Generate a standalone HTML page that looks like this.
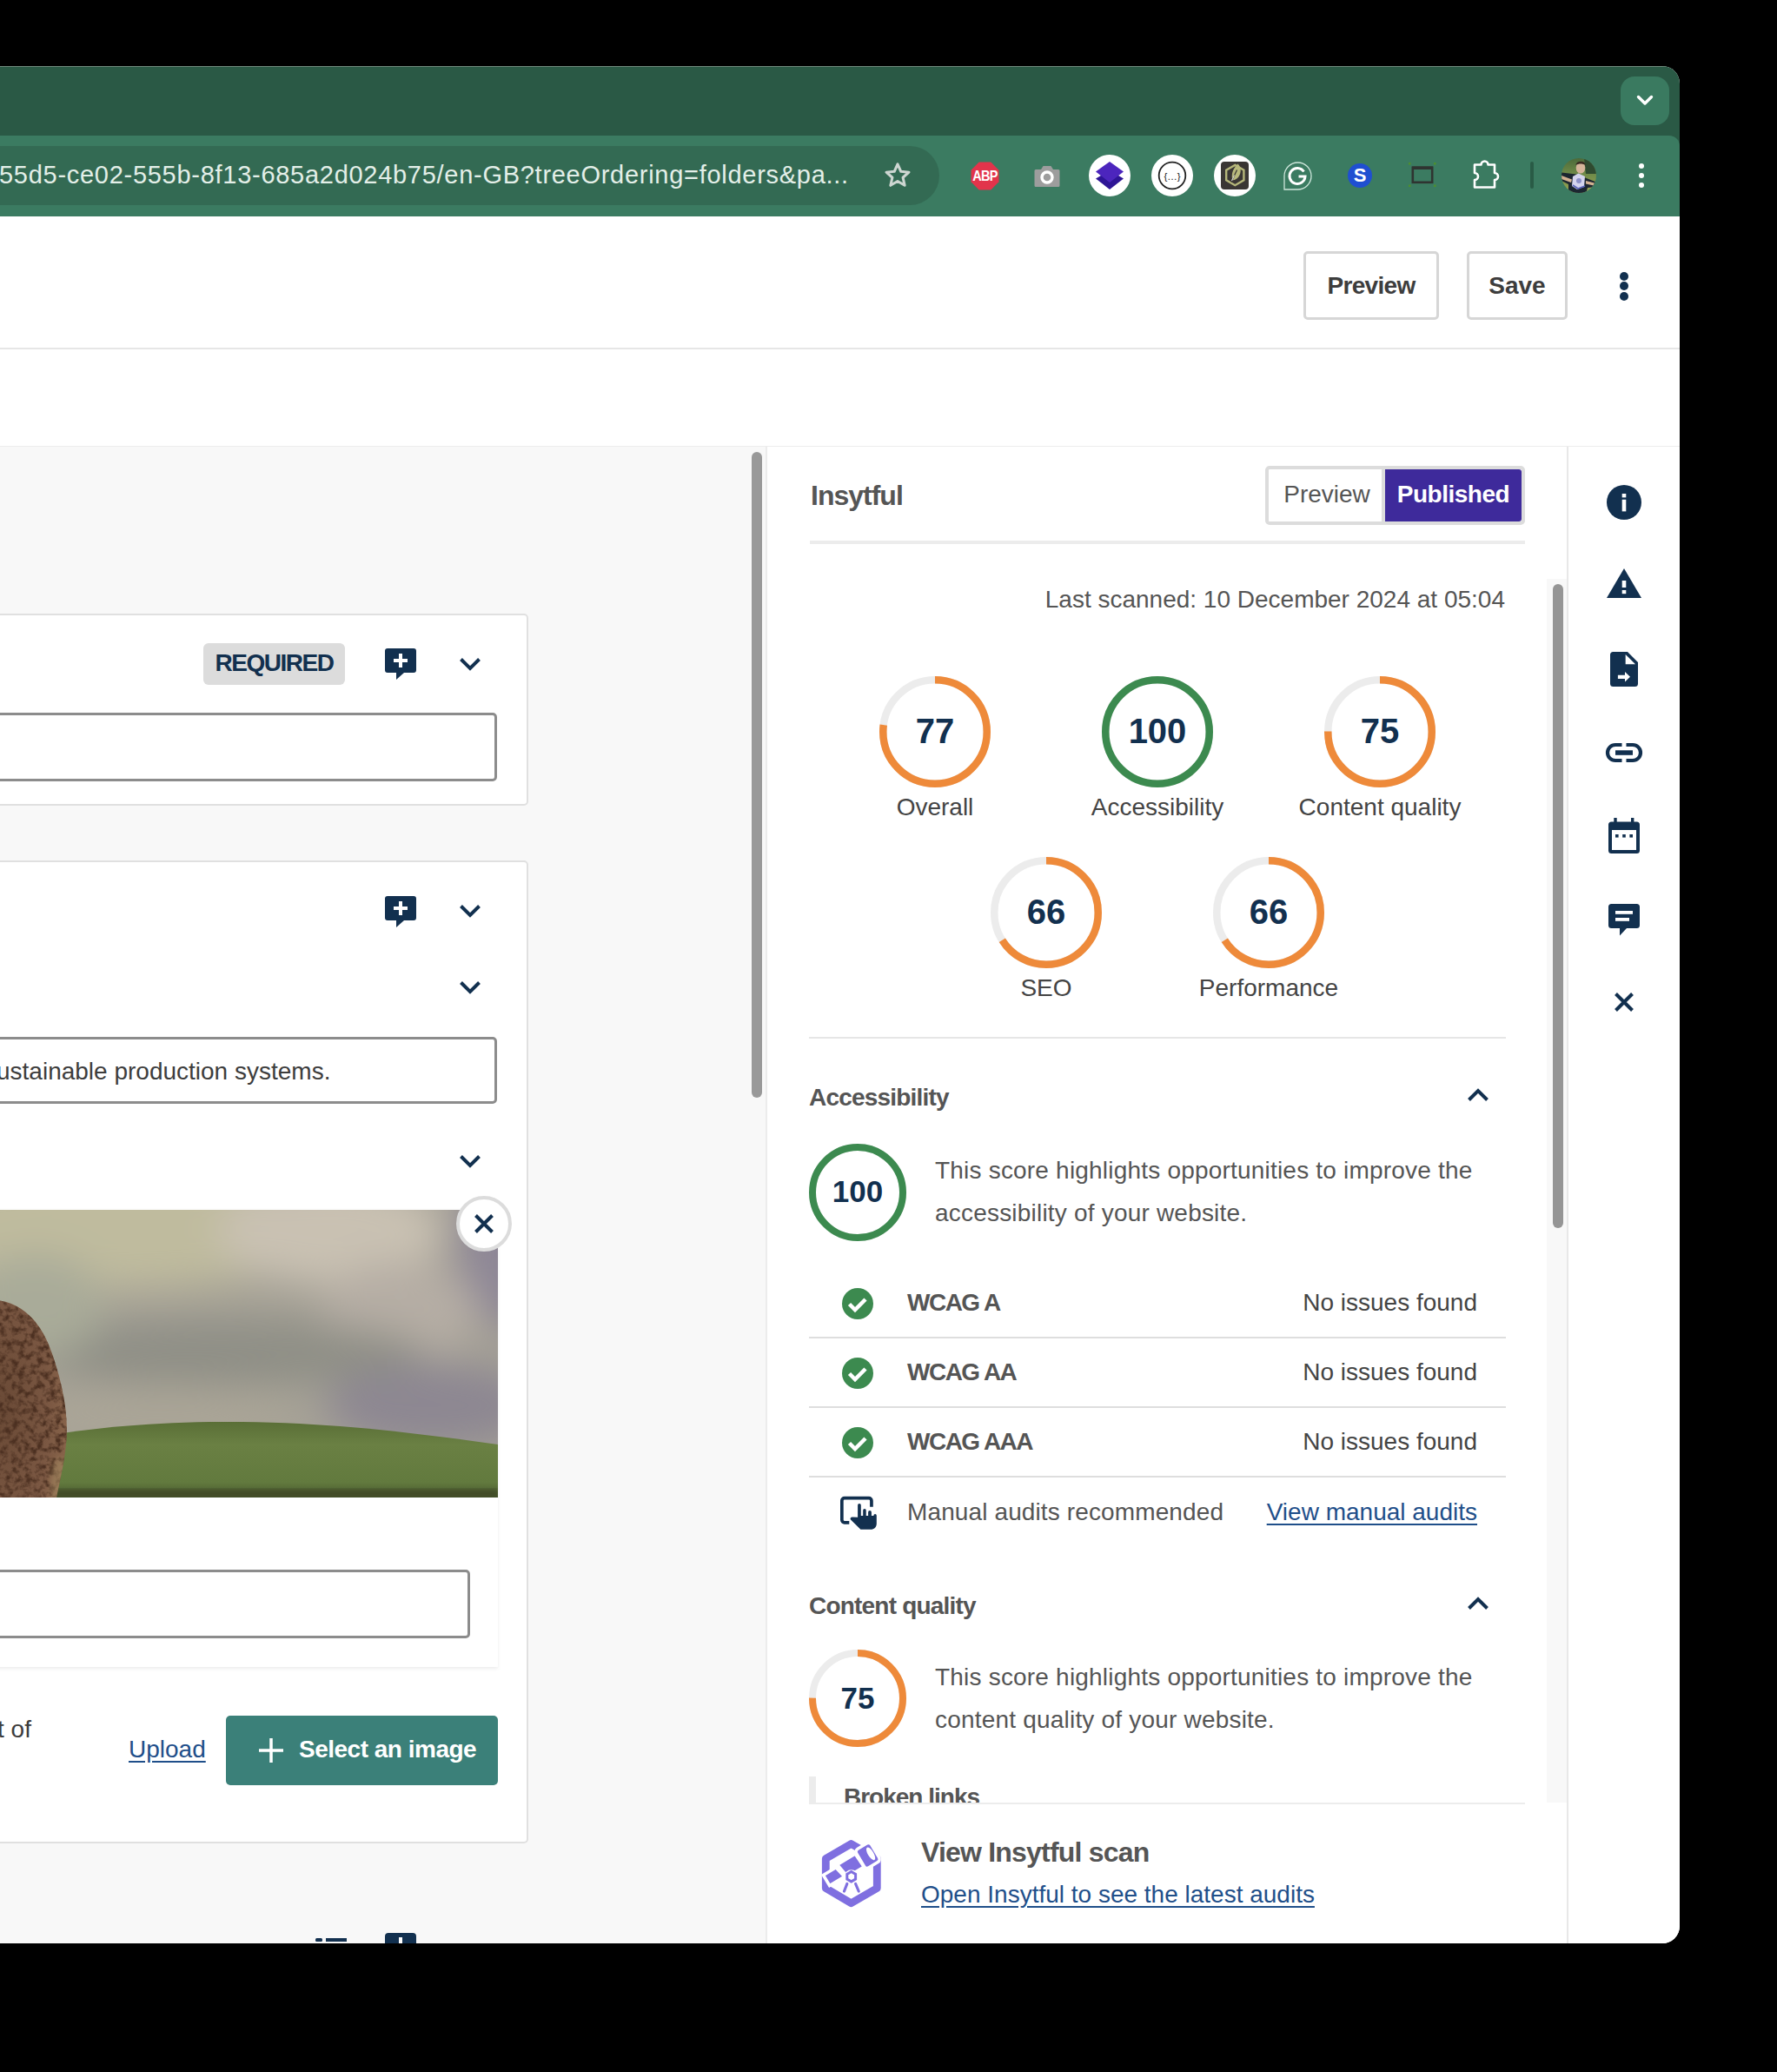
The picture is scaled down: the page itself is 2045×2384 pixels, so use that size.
<!DOCTYPE html>
<html><head><meta charset="utf-8">
<style>
html,body{margin:0;padding:0}
body{width:2045px;height:2384px;background:#000;position:relative;overflow:hidden;font-family:"Liberation Sans",sans-serif}
.a{position:absolute}
.t{position:absolute;line-height:1;white-space:nowrap}
.win{position:absolute;left:0;top:76px;width:1933px;height:2160px;border-radius:0 20px 20px 0;overflow:hidden;background:#fff}
.pg{position:absolute;left:0;top:-76px;width:1933px;height:2236px}
svg{position:absolute;overflow:visible}
</style></head>
<body>
<div class="win"><div class="pg">
  <!-- tab bar -->
  <div class="a" style="left:0;top:76px;width:1933px;height:100px;background:#2a5945"></div>
  <div class="a" style="left:0;top:76px;width:1933px;height:1px;background:#6f8a7c"></div>
  <div class="a" style="left:1865px;top:88px;width:56px;height:56px;border-radius:16px;background:#3a7a60"></div>
  <svg style="left:1865px;top:88px" width="56" height="56"><path d="M20.5 23.5 L28 31 L35.5 23.5" fill="none" stroke="#fff" stroke-width="3.4" stroke-linecap="round" stroke-linejoin="round"/></svg>
  <!-- toolbar -->
  <div class="a" style="left:0;top:156px;width:1933px;height:93px;background:#3b7b61;border-radius:0 12px 0 0"></div>
  <div class="a" style="left:-40px;top:168px;width:1121px;height:68px;border-radius:34px;background:#336a53"></div>
  <div class="t" style="left:-1px;top:187px;font-size:29px;letter-spacing:0.72px;color:#e3efe8">55d5-ce02-555b-8f13-685a2d024b75/en-GB?treeOrdering=folders&amp;pa...</div>
  <!-- star -->
  <svg style="left:1017px;top:186px" width="32" height="32" viewBox="0 0 24 24"><path d="M12 2.2l2.85 6.3 6.9.65-5.2 4.55 1.55 6.75L12 16.9l-6.1 3.55 1.55-6.75-5.2-4.55 6.9-.65z" fill="none" stroke="#cdd6d1" stroke-width="2.3" stroke-linejoin="round"/></svg>
  <!-- ABP -->
  <svg style="left:1117px;top:186px" width="33" height="33" viewBox="0 0 33 33"><path d="M9.7 0.5h13.6l9.2 9.2v13.6l-9.2 9.2H9.7L0.5 23.3V9.7z" fill="#e2344b"/><text x="16.5" y="22.3" text-anchor="middle" font-family="Liberation Sans" font-weight="bold" font-size="16.5" fill="#fff" letter-spacing="-0.8" transform="translate(16.5 0) scale(0.88 1) translate(-16.5 0)">ABP</text></svg>
  <!-- camera -->
  <svg style="left:1190px;top:188px" width="30" height="30" viewBox="0 0 30 30"><path d="M2 7h6l2.5-4h9l2.5 4h6a1.5 1.5 0 0 1 1.5 1.5v17a1.5 1.5 0 0 1-1.5 1.5H2A1.5 1.5 0 0 1 .5 25.5v-17A1.5 1.5 0 0 1 2 7z" fill="#9d9d9d"/><circle cx="15" cy="16" r="6" fill="none" stroke="#fff" stroke-width="3.4"/></svg>
  <!-- layers -->
  <div class="a" style="left:1253px;top:178px;width:48px;height:48px;border-radius:50%;background:#fff"></div>
  <svg style="left:1261px;top:185px" width="32" height="34" viewBox="0 0 32 34"><path d="M0 20.5L16 11 32 20.5 16 33z" fill="#2e1596"/><path d="M0 12.5L16 1 32 12.5 16 25z" fill="#4c25bd"/></svg>
  <!-- {...} -->
  <div class="a" style="left:1325px;top:178px;width:48px;height:48px;border-radius:50%;background:#fff"></div>
  <svg style="left:1325px;top:178px" width="48" height="48"><circle cx="24" cy="24" r="15.3" fill="none" stroke="#222" stroke-width="1.8"/><text x="24" y="28.5" text-anchor="middle" font-family="Liberation Sans" font-size="11.5" fill="#222">{…}</text></svg>
  <!-- leaf -->
  <div class="a" style="left:1397px;top:178px;width:48px;height:48px;border-radius:50%;background:#fff"></div>
  <div class="a" style="left:1405px;top:186px;width:32px;height:32px;border-radius:4px;background:#3a3634"></div>
  <svg style="left:1405px;top:186px" width="32" height="32" viewBox="0 0 32 32"><path d="M16.3 3.9l10.1 5.8v11.7l-10.1 5.8-10.1-5.8V9.7z" fill="none" stroke="#b5b67a" stroke-width="2.4"/><path d="M19.5 2.5c4 3.5 4.5 10.5 0.5 15.5-2 2.5-5 3.5-6.5 3-1.5-4-.5-10 2-13.5 1-1.7 2.5-3.5 4-5z" fill="#b8b97c"/><path d="M12 23.5l6.5-14" stroke="#3a3634" stroke-width="1.3"/><path d="M12.5 22l3-6.5" stroke="#d8d8d0" stroke-width="1.2"/></svg>
  <!-- G -->
  <svg style="left:1477px;top:186px" width="33" height="33" viewBox="0 0 33 33"><path d="M1 32V16.5A15.5 15.5 0 1 1 16.5 32z" fill="none" stroke="#cfe7dc" stroke-width="1.3"/><path d="M23.5 11.5A9 9 0 1 0 25 17h-7.5" fill="none" stroke="#fff" stroke-width="3"/></svg>
  <!-- S -->
  <div class="a" style="left:1551px;top:188px;width:28px;height:28px;border-radius:50%;background:#1f4fd1"></div>
  <div class="t" style="left:1551px;top:191px;width:28px;text-align:center;font-size:22px;font-weight:bold;color:#fff">S</div>
  <!-- window -->
  <svg style="left:1620px;top:186px" width="34" height="30" viewBox="0 0 34 30"><rect x="5.8" y="6.8" width="22.4" height="17" fill="none" stroke="#2f3431" stroke-width="2.6"/><rect x="5" y="5.5" width="24" height="3.5" fill="#2f3431"/><g fill="#4c8f2e"><rect x="1" y="1" width="2.5" height="2.5"/><rect x="30" y="1" width="2.5" height="2.5"/><rect x="1" y="26.5" width="2.5" height="2.5"/><rect x="30" y="26.5" width="2.5" height="2.5"/></g></svg>
  <!-- puzzle -->
  <svg style="left:1693px;top:183px" width="36" height="36" viewBox="0 0 36 36"><path d="M4 6.5h7.5a4 4 0 0 1 8 0H27v9.5a4 4 0 0 1 0 8V32.5H4V24a4 4 0 0 0 0-8z" fill="none" stroke="#fff" stroke-width="2.6" stroke-linejoin="round"/></svg>
  <!-- separator -->
  <div class="a" style="left:1761px;top:186px;width:4px;height:31px;border-radius:2px;background:#295b46"></div>
  <!-- avatar -->
  <svg style="left:1797px;top:182px" width="40" height="40" viewBox="0 0 40 40"><defs><clipPath id="av"><circle cx="20" cy="20" r="20"/></clipPath><linearGradient id="avg" x1="0" y1="0" x2="0" y2="1"><stop offset="0" stop-color="#4c6a3a"/><stop offset="0.45" stop-color="#6f8a48"/><stop offset="1" stop-color="#9aa552"/></linearGradient></defs><g clip-path="url(#av)"><rect width="40" height="40" fill="url(#avg)"/><path d="M26 0h14v18H28z" fill="#2f4a30"/><path d="M0 16.5L17 18.5 40 27.5V33L30 34 28 41H8V30L0 26z" fill="#1c2630"/><path d="M0 20l12 4.5-1 3.5L0 24z" fill="#d2b090"/><path d="M28 26l10 2.5-1 3-9-2z" fill="#d2b090"/><ellipse cx="22" cy="11" rx="5.3" ry="6.6" fill="#d6b49a"/><path d="M16.5 8c0-5 11-6 11 0-3-2-8-2-11 0z" fill="#3a2b22"/><path d="M19.5 17.5l7.5 3.5-1 12-8 3-6-4 1-11z" fill="#d4d4ee"/><path d="M13 31l6 4 8-3" fill="none" stroke="#5a62b8" stroke-width="1.6"/><circle cx="20" cy="26" r="3" fill="#8c90c8"/></g></svg>
  <!-- dots -->
  <div class="a" style="left:1886px;top:188px;width:6px;height:6px;border-radius:50%;background:#fff"></div>
  <div class="a" style="left:1886px;top:199px;width:6px;height:6px;border-radius:50%;background:#fff"></div>
  <div class="a" style="left:1886px;top:210px;width:6px;height:6px;border-radius:50%;background:#fff"></div>

  <!-- page header -->
  <div class="a" style="left:0;top:249px;width:1933px;height:151px;background:#fff;border-bottom:2px solid #e6e6e6"></div>
  <div class="a" style="left:0;top:402px;width:1933px;height:111px;background:#fff;border-bottom:2px solid #ececec"></div>
  <div class="a" style="left:1500px;top:289px;width:150px;height:73px;border:3px solid #d6d6d6;border-radius:5px"></div>
  <div class="t" style="left:1500px;top:315px;width:156px;text-align:center;font-size:28px;font-weight:bold;color:#3d3d3d;letter-spacing:-0.7px">Preview</div>
  <div class="a" style="left:1688px;top:289px;width:110px;height:73px;border:3px solid #d6d6d6;border-radius:5px"></div>
  <div class="t" style="left:1688px;top:315px;width:116px;text-align:center;font-size:28px;font-weight:bold;color:#3d3d3d">Save</div>
  <div class="a" style="left:1864px;top:313px;width:10px;height:10px;border-radius:50%;background:#12304f"></div>
  <div class="a" style="left:1864px;top:324px;width:10px;height:10px;border-radius:50%;background:#12304f"></div>
  <div class="a" style="left:1864px;top:336px;width:10px;height:10px;border-radius:50%;background:#12304f"></div>
  <!-- content left -->
  <div class="a" style="left:0;top:514px;width:882px;height:1722px;background:#f8f8f8"></div>
  <div class="a" style="left:865px;top:520px;width:12px;height:743px;border-radius:6px;background:#999"></div>
  <!-- card 1 -->
  <div class="a" style="left:-10px;top:706px;width:614px;height:217px;background:#fff;border:2px solid #e0e0e0;border-radius:5px"></div>
  <div class="a" style="left:234px;top:740px;width:163px;height:48px;background:#dcdcdc;border-radius:6px"></div>
  <div class="t" style="left:234px;top:749px;width:163px;text-align:center;font-size:28px;font-weight:bold;color:#12304f;letter-spacing:-1.5px">REQUIRED</div>
  <svg style="left:443px;top:746px" width="36" height="36" viewBox="0 0 36 36"><path d="M3 0h30a3 3 0 0 1 3 3v22a3 3 0 0 1-3 3H22l-9 8v-8H3a3 3 0 0 1-3-3V3a3 3 0 0 1 3-3z" fill="#12304f"/><path d="M18 6v16M10 14h16" stroke="#fff" stroke-width="4"/></svg>
  <svg style="left:529px;top:757px" width="24" height="15" viewBox="0 0 24 15"><path d="M1.5 1.5L12 12 22.5 1.5" fill="none" stroke="#12304f" stroke-width="4"/></svg>
  <div class="a" style="left:-10px;top:820px;width:576px;height:73px;border:3px solid #8c8c8c;border-radius:5px;background:#fff"></div>
  <!-- card 2 -->
  <div class="a" style="left:-10px;top:990px;width:614px;height:1127px;background:#fff;border:2px solid #e0e0e0;border-radius:5px"></div>
  <svg style="left:443px;top:1031px" width="36" height="36" viewBox="0 0 36 36"><path d="M3 0h30a3 3 0 0 1 3 3v22a3 3 0 0 1-3 3H22l-9 8v-8H3a3 3 0 0 1-3-3V3a3 3 0 0 1 3-3z" fill="#12304f"/><path d="M18 6v16M10 14h16" stroke="#fff" stroke-width="4"/></svg>
  <svg style="left:529px;top:1041px" width="24" height="15" viewBox="0 0 24 15"><path d="M1.5 1.5L12 12 22.5 1.5" fill="none" stroke="#12304f" stroke-width="4"/></svg>
  <svg style="left:529px;top:1129px" width="24" height="15" viewBox="0 0 24 15"><path d="M1.5 1.5L12 12 22.5 1.5" fill="none" stroke="#12304f" stroke-width="4"/></svg>
  <div class="a" style="left:-10px;top:1193px;width:576px;height:71px;border:3px solid #8c8c8c;border-radius:5px;background:#fff"></div>
  <div class="t" style="left:-4px;top:1219px;font-size:28px;color:#3d3d3d">ustainable production systems.</div>
  <svg style="left:529px;top:1329px" width="24" height="15" viewBox="0 0 24 15"><path d="M1.5 1.5L12 12 22.5 1.5" fill="none" stroke="#12304f" stroke-width="4"/></svg>
  <!-- inner card -->
  <div class="a" style="left:-10px;top:1391px;width:583px;height:527px;background:#fff;box-shadow:0 2px 4px rgba(0,0,0,0.08)"></div>
  <svg style="left:0;top:1392px" width="573" height="331" viewBox="0 0 573 331">
    <defs>
      <filter id="bl" x="-50%" y="-50%" width="200%" height="200%"><feGaussianBlur stdDeviation="22"/></filter>
      <filter id="bs" x="-20%" y="-20%" width="140%" height="140%"><feGaussianBlur stdDeviation="3"/></filter>
      <linearGradient id="hill" x1="0" y1="0" x2="0" y2="1"><stop offset="0" stop-color="#5a6f37"/><stop offset="0.3" stop-color="#6a8043"/><stop offset="0.8" stop-color="#627a3e"/><stop offset="1" stop-color="#46552c"/></linearGradient>
      <radialGradient id="bison" cx="0.1" cy="0.55" r="0.95"><stop offset="0" stop-color="#6a4a36"/><stop offset="0.6" stop-color="#7a5742"/><stop offset="1" stop-color="#8f6a4e"/></radialGradient>
      <filter id="fur" x="0" y="0" width="100%" height="100%" color-interpolation-filters="sRGB"><feTurbulence type="fractalNoise" baseFrequency="0.14" numOctaves="3" seed="7"/><feColorMatrix type="matrix" values="0 0 0 0 0.3  0 0 0 0 0.19  0 0 0 0 0.13  3 0 0 0 -1.25"/></filter>
      <clipPath id="ic"><rect width="573" height="331"/></clipPath>
    </defs>
    <g clip-path="url(#ic)">
    <rect width="573" height="331" fill="#a5a196"/>
    <g filter="url(#bl)">
      <ellipse cx="140" cy="20" rx="260" ry="70" fill="#bfbb9e"/>
      <ellipse cx="380" cy="25" rx="130" ry="60" fill="#c9c1b2"/>
      <ellipse cx="600" cy="40" rx="75" ry="100" fill="#8e8796"/>
      <ellipse cx="460" cy="115" rx="90" ry="55" fill="#b5ada4"/>
      <ellipse cx="260" cy="165" rx="230" ry="38" fill="#8f8f86"/>
      <ellipse cx="500" cy="225" rx="125" ry="48" fill="#8d8792"/>
      <ellipse cx="170" cy="235" rx="170" ry="35" fill="#aaa597"/>
      <ellipse cx="40" cy="110" rx="80" ry="60" fill="#a9ab99"/>
    </g>
    <path d="M40 262 C110 250 180 244 261 244 C380 244 470 256 573 270 L573 331 L40 331 Z" fill="url(#hill)"/>
    <rect x="0" y="322" width="573" height="9" fill="#3f4a25" filter="url(#bs)"/>
    <clipPath id="bc"><path d="M-5 104 C20 106 42 122 56 155 C68 185 77 222 77 254 C76 284 70 306 65 331 L-5 331 Z"/></clipPath>
    <g clip-path="url(#bc)">
      <rect x="-5" y="100" width="90" height="235" fill="url(#bison)"/>
      <rect x="-5" y="100" width="90" height="235" filter="url(#fur)"/>
      <ellipse cx="70" cy="315" rx="12" ry="30" fill="#a48a62" opacity="0.55" filter="url(#bs)"/>
    </g>
    </g>
  </svg>
  <div class="a" style="left:525px;top:1376px;width:56px;height:56px;border-radius:50%;background:#fff;border:4px solid #dcdcdc"></div>
  <svg style="left:546px;top:1397px" width="22" height="22" viewBox="0 0 22 22"><path d="M1.5 1.5L20.5 20.5M20.5 1.5L1.5 20.5" stroke="#12304f" stroke-width="4"/></svg>
  <div class="a" style="left:-10px;top:1806px;width:545px;height:73px;border:3px solid #8c8c8c;border-radius:5px;background:#fff"></div>
  <div class="t" style="left:-3px;top:1976px;font-size:28px;color:#3d3d3d">t of</div>
  <div class="t" style="left:148px;top:1999px;font-size:28px;color:#1f4f8a;text-decoration:underline;text-underline-offset:4px">Upload</div>
  <div class="a" style="left:260px;top:1974px;width:313px;height:80px;background:#3b8079;border-radius:5px"></div>
  <svg style="left:297px;top:1999px" width="30" height="30" viewBox="0 0 30 30"><path d="M15 1v28M1 15h28" stroke="#fff" stroke-width="3.5"/></svg>
  <div class="t" style="left:344px;top:1999px;font-size:28px;font-weight:bold;color:#fff;letter-spacing:-0.5px">Select an image</div>
  <!-- bottom icons peeking -->
  <svg style="left:362px;top:2229px" width="40" height="10"><rect x="1" y="1" width="8" height="4" rx="1.5" fill="#12304f"/><rect x="13" y="1" width="24" height="4" fill="#12304f"/></svg>
  <div class="a" style="left:443px;top:2224px;width:36px;height:28px;border-radius:4px;background:#12304f"></div>
  <div class="a" style="left:459px;top:2229px;width:4px;height:12px;background:#fff"></div>
  <!-- right of left content: gap strip -->
  <!-- right panel -->
  <div class="a" style="left:881px;top:514px;width:923px;height:1722px;background:#fff;border-left:2px solid #ececec"></div>
  <div class="a" style="left:1780px;top:666px;width:23px;height:1408px;background:#f8f8f8"></div>
  <div class="a" style="left:1787px;top:672px;width:12px;height:741px;border-radius:6px;background:#959595"></div>
  <div class="t" style="left:933px;top:554px;font-size:32px;font-weight:bold;color:#555;letter-spacing:-1px">Insytful</div>
  <div class="a" style="left:1456px;top:536px;width:291px;height:60px;border:4px solid #dcdcdc;border-radius:5px;background:#fff"></div>
  <div class="a" style="left:1590px;top:540px;width:4px;height:60px;background:#dcdcdc"></div>
  <div class="a" style="left:1594px;top:540px;width:157px;height:60px;background:#3e2a9b;border-radius:0 3px 3px 0"></div>
  <div class="t" style="left:1460px;top:555px;width:134px;text-align:center;font-size:28px;color:#555">Preview</div>
  <div class="t" style="left:1594px;top:555px;width:157px;text-align:center;font-size:28px;font-weight:bold;color:#fff;letter-spacing:-0.5px">Published</div>
  <div class="a" style="left:932px;top:622px;width:823px;height:4px;background:#ececec"></div>
  <div class="t" style="left:1032px;top:676px;width:700px;text-align:right;font-size:28px;color:#555">Last scanned: 10 December 2024 at 05:04</div>
  <svg style="left:1012.0px;top:778.0px" width="128" height="128"><circle cx="64.0" cy="64.0" r="59.75" fill="none" stroke="#ececec" stroke-width="8.5"/><circle cx="64.0" cy="64.0" r="59.75" fill="none" stroke="#ee8a3a" stroke-width="8.5" stroke-dasharray="289.07 375.42" transform="rotate(-90 64.0 64.0)"/></svg>
  <div class="t" style="left:976px;top:821px;width:200px;text-align:center;font-size:40px;font-weight:bold;color:#12304f">77</div>
  <div class="t" style="left:926px;top:915px;width:300px;text-align:center;font-size:28px;color:#444">Overall</div>
  <svg style="left:1268.0px;top:778.0px" width="128" height="128"><circle cx="64.0" cy="64.0" r="59.75" fill="none" stroke="#ececec" stroke-width="8.5"/><circle cx="64.0" cy="64.0" r="59.75" fill="none" stroke="#3c8a4f" stroke-width="8.5" stroke-dasharray="375.42 375.42" transform="rotate(-90 64.0 64.0)"/></svg>
  <div class="t" style="left:1232px;top:821px;width:200px;text-align:center;font-size:40px;font-weight:bold;color:#12304f">100</div>
  <div class="t" style="left:1182px;top:915px;width:300px;text-align:center;font-size:28px;color:#444">Accessibility</div>
  <svg style="left:1524.0px;top:778.0px" width="128" height="128"><circle cx="64.0" cy="64.0" r="59.75" fill="none" stroke="#ececec" stroke-width="8.5"/><circle cx="64.0" cy="64.0" r="59.75" fill="none" stroke="#ee8a3a" stroke-width="8.5" stroke-dasharray="281.57 375.42" transform="rotate(-90 64.0 64.0)"/></svg>
  <div class="t" style="left:1488px;top:821px;width:200px;text-align:center;font-size:40px;font-weight:bold;color:#12304f">75</div>
  <div class="t" style="left:1438px;top:915px;width:300px;text-align:center;font-size:28px;color:#444">Content quality</div>
  <svg style="left:1140.0px;top:986.0px" width="128" height="128"><circle cx="64.0" cy="64.0" r="59.75" fill="none" stroke="#ececec" stroke-width="8.5"/><circle cx="64.0" cy="64.0" r="59.75" fill="none" stroke="#ee8a3a" stroke-width="8.5" stroke-dasharray="247.78 375.42" transform="rotate(-90 64.0 64.0)"/></svg>
  <div class="t" style="left:1104px;top:1029px;width:200px;text-align:center;font-size:40px;font-weight:bold;color:#12304f">66</div>
  <div class="t" style="left:1054px;top:1123px;width:300px;text-align:center;font-size:28px;color:#444">SEO</div>
  <svg style="left:1396.0px;top:986.0px" width="128" height="128"><circle cx="64.0" cy="64.0" r="59.75" fill="none" stroke="#ececec" stroke-width="8.5"/><circle cx="64.0" cy="64.0" r="59.75" fill="none" stroke="#ee8a3a" stroke-width="8.5" stroke-dasharray="247.78 375.42" transform="rotate(-90 64.0 64.0)"/></svg>
  <div class="t" style="left:1360px;top:1029px;width:200px;text-align:center;font-size:40px;font-weight:bold;color:#12304f">66</div>
  <div class="t" style="left:1310px;top:1123px;width:300px;text-align:center;font-size:28px;color:#444">Performance</div>
  <div class="a" style="left:931px;top:1193px;width:802px;height:2px;background:#e6e6e6"></div>
  <div class="t" style="left:931px;top:1249px;font-size:28px;font-weight:bold;color:#555;letter-spacing:-0.8px">Accessibility</div>
  <svg style="left:1689px;top:1252px" width="24" height="15" viewBox="0 0 24 15"><path d="M1.5 13.5L12 3 22.5 13.5" fill="none" stroke="#12304f" stroke-width="4"/></svg>
  <svg style="left:931.0px;top:1315.5px" width="112" height="112"><circle cx="56.0" cy="56.0" r="52.0" fill="none" stroke="#ececec" stroke-width="8"/><circle cx="56.0" cy="56.0" r="52.0" fill="none" stroke="#3c8a4f" stroke-width="8" stroke-dasharray="326.73 326.73" transform="rotate(-90 56.0 56.0)"/></svg>
  <div class="t" style="left:907px;top:1353px;width:160px;text-align:center;font-size:35px;font-weight:bold;color:#12304f">100</div>
  <div class="t" style="left:1076px;top:1322px;font-size:28px;color:#555;line-height:49px;white-space:normal;width:700px;letter-spacing:0.2px">This score highlights opportunities to improve the<br>accessibility of your website.</div>
  <svg style="left:969px;top:1482px" width="36" height="36"><circle cx="18" cy="18" r="18" fill="#3c8a4f"/><path d="M8.5 18.5l6.5 6.5 12-12" fill="none" stroke="#fff" stroke-width="4.5"/></svg>
  <div class="t" style="left:1044px;top:1485px;font-size:28px;font-weight:bold;color:#555;letter-spacing:-1.5px">WCAG A</div>
  <div class="t" style="left:1300px;top:1485px;width:400px;text-align:right;font-size:28px;color:#444">No issues found</div>
  <div class="a" style="left:931px;top:1538px;width:802px;height:2px;background:#dedede"></div>
  <svg style="left:969px;top:1562px" width="36" height="36"><circle cx="18" cy="18" r="18" fill="#3c8a4f"/><path d="M8.5 18.5l6.5 6.5 12-12" fill="none" stroke="#fff" stroke-width="4.5"/></svg>
  <div class="t" style="left:1044px;top:1565px;font-size:28px;font-weight:bold;color:#555;letter-spacing:-1.5px">WCAG AA</div>
  <div class="t" style="left:1300px;top:1565px;width:400px;text-align:right;font-size:28px;color:#444">No issues found</div>
  <div class="a" style="left:931px;top:1618px;width:802px;height:2px;background:#dedede"></div>
  <svg style="left:969px;top:1642px" width="36" height="36"><circle cx="18" cy="18" r="18" fill="#3c8a4f"/><path d="M8.5 18.5l6.5 6.5 12-12" fill="none" stroke="#fff" stroke-width="4.5"/></svg>
  <div class="t" style="left:1044px;top:1645px;font-size:28px;font-weight:bold;color:#555;letter-spacing:-1.5px">WCAG AAA</div>
  <div class="t" style="left:1300px;top:1645px;width:400px;text-align:right;font-size:28px;color:#444">No issues found</div>
  <div class="a" style="left:931px;top:1698px;width:802px;height:2px;background:#dedede"></div>
  <svg style="left:966px;top:1721px" width="46" height="40" viewBox="0 0 46 40"><path d="M11.3 30.85H5.85a3 3 0 0 1-3-3V5.65a3 3 0 0 1 3-3h28.1a3 3 0 0 1 3 3V12.8" fill="none" stroke="#12304f" stroke-width="3.7"/><path d="M21.1 24.8V10.85a1.85 1.85 0 0 1 3.7 0V23h2.4V16.75a1.75 1.75 0 0 1 3.5 0V23h2.4V18.9a1.9 1.9 0 0 1 3.8 0V23h2.5V22.7a1.7 1.7 0 0 1 3.4 0V32c0 4-2.8 6.8-6.8 6.8H24.4L13 27.5c-1-1-.3-3.1 2-3.1z" fill="#12304f"/></svg>
  <div class="t" style="left:1044px;top:1726px;font-size:28px;color:#555;letter-spacing:0.12px">Manual audits recommended</div>
  <div class="t" style="left:1300px;top:1726px;width:400px;text-align:right;font-size:28px;color:#1f4f8a;text-decoration:underline;text-underline-offset:4px">View manual audits</div>
  <div class="t" style="left:931px;top:1834px;font-size:28px;font-weight:bold;color:#555;letter-spacing:-0.8px">Content quality</div>
  <svg style="left:1689px;top:1837px" width="24" height="15" viewBox="0 0 24 15"><path d="M1.5 13.5L12 3 22.5 13.5" fill="none" stroke="#12304f" stroke-width="4"/></svg>
  <svg style="left:931.0px;top:1898.0px" width="112" height="112"><circle cx="56.0" cy="56.0" r="52.0" fill="none" stroke="#ececec" stroke-width="8"/><circle cx="56.0" cy="56.0" r="52.0" fill="none" stroke="#ee8a3a" stroke-width="8" stroke-dasharray="245.04 326.73" transform="rotate(-90 56.0 56.0)"/></svg>
  <div class="t" style="left:907px;top:1936px;width:160px;text-align:center;font-size:35px;font-weight:bold;color:#12304f">75</div>
  <div class="t" style="left:1076px;top:1905px;font-size:28px;color:#555;line-height:49px;white-space:normal;width:700px;letter-spacing:0.2px">This score highlights opportunities to improve the<br>content quality of your website.</div>
  <div class="a" style="left:931px;top:2044px;width:850px;height:30px;overflow:hidden"><div class="a" style="left:0;top:0;width:8px;height:40px;background:#ececec"></div><div class="t" style="left:40px;top:10px;font-size:28px;font-weight:bold;color:#555;letter-spacing:-1px">Broken links</div></div>
  <div class="a" style="left:931px;top:2074px;width:824px;height:2px;background:#ececec"></div>
  <svg style="left:945px;top:2116px" width="70" height="80" viewBox="0 0 70 80"><path d="M34.5 5.5L64.3 22.5V56.5L34.5 73.8 5.3 56.5V22.5Z" fill="none" stroke="#7f6fe0" stroke-width="8.8" stroke-linejoin="round"/><g transform="translate(33.5,31) rotate(-31)"><path d="M-32 -7H-15L-12 7H-32Z" fill="#7f6fe0" stroke="#fff" stroke-width="3.5"/><path d="M-12 -9H12L13 9H-9Z" fill="#7f6fe0" stroke="#fff" stroke-width="3.5"/><rect x="13.5" y="-12.5" width="20" height="25" rx="4" fill="#7f6fe0" stroke="#fff" stroke-width="3.5"/><ellipse cx="27.5" cy="0" rx="3.3" ry="8.3" fill="#fff"/></g><circle cx="34.7" cy="43.2" r="8" fill="#fff"/><path d="M34.7 37.5l4.9 2.85v5.7l-4.9 2.85-4.9-2.85v-5.7z" fill="none" stroke="#7f6fe0" stroke-width="3"/><path d="M29.8 51.5L26.5 60M39.6 51.5L43.2 60" stroke="#7f6fe0" stroke-width="3.2" stroke-linecap="round"/></svg>
  <div class="t" style="left:1060px;top:2115px;font-size:32px;font-weight:bold;color:#555;letter-spacing:-0.8px">View Insytful scan</div>
  <div class="t" style="left:1060px;top:2166px;font-size:28px;color:#1f4f8a;text-decoration:underline;text-underline-offset:4px">Open Insytful to see the latest audits</div>
  <!-- sidebar -->
  <div class="a" style="left:1803px;top:514px;width:130px;height:1722px;background:#fff;border-left:2px solid #e8e8e8"></div>
  <svg style="left:1849px;top:558px" width="40" height="40" viewBox="0 0 40 40"><circle cx="20" cy="20" r="20" fill="#12304f"/><rect x="17.7" y="10" width="4.6" height="4.4" fill="#fff"/><rect x="17.7" y="16.8" width="4.6" height="13.6" fill="#fff"/></svg>
  <svg style="left:1849px;top:654px" width="40" height="34" viewBox="0 0 40 34"><path d="M20 0L40 34H0z" fill="#12304f"/><rect x="17.7" y="14" width="4.6" height="8" fill="#fff"/><rect x="17.7" y="25" width="4.6" height="4.2" fill="#fff"/></svg>
  <svg style="left:1853px;top:750px" width="32" height="40" viewBox="0 0 32 40"><path d="M3.5 0h16.5L32 12v24.5a3.5 3.5 0 0 1-3.5 3.5h-25A3.5 3.5 0 0 1 0 36.5v-33A3.5 3.5 0 0 1 3.5 0z" fill="#12304f"/><path d="M17.7 2.9v11.3h11.3z" fill="#fff"/><path d="M8.9 26.8h8.1V23l6 5.8-6 5.8V31H8.9z" fill="#fff"/></svg>
  <svg style="left:1849px;top:855px" width="40" height="22" viewBox="0 0 40 22"><path d="M17.5 2H10a9 9 0 0 0 0 18h7.5M22.5 2H30a9 9 0 0 1 0 18h-7.5" fill="none" stroke="#12304f" stroke-width="4.2"/><rect x="10" y="8.3" width="20" height="5.5" fill="#12304f"/></svg>
  <svg style="left:1851px;top:941px" width="36" height="41" viewBox="0 0 36 41"><rect x="6.3" y="0" width="3.4" height="6" fill="#12304f"/><rect x="26" y="0" width="3.4" height="6" fill="#12304f"/><path d="M3.5 4.5h29a3.5 3.5 0 0 1 3.5 3.5v29.5a3.5 3.5 0 0 1-3.5 3.5h-29A3.5 3.5 0 0 1 0 37.5V8a3.5 3.5 0 0 1 3.5-3.5z M4 14v23h28V14z" fill="#12304f" fill-rule="evenodd"/><rect x="8" y="19" width="3.6" height="3.6" fill="#12304f"/><rect x="16.2" y="19" width="3.6" height="3.6" fill="#12304f"/><rect x="24.4" y="19" width="3.6" height="3.6" fill="#12304f"/></svg>
  <svg style="left:1851px;top:1040px" width="36" height="37" viewBox="0 0 36 37"><path d="M3.5 0h29A3.5 3.5 0 0 1 36 3.5v21a3.5 3.5 0 0 1-3.5 3.5H21l-8 8.5V28H3.5A3.5 3.5 0 0 1 0 24.5v-21A3.5 3.5 0 0 1 3.5 0z" fill="#12304f"/><rect x="8" y="8" width="20" height="3.8" fill="#fff"/><rect x="8" y="16" width="16" height="3.8" fill="#fff"/></svg>
  <svg style="left:1858px;top:1142px" width="22" height="22" viewBox="0 0 22 22"><path d="M1.5 1.5L20.5 20.5M20.5 1.5L1.5 20.5" stroke="#12304f" stroke-width="4"/></svg>
</div></div>
</body></html>
